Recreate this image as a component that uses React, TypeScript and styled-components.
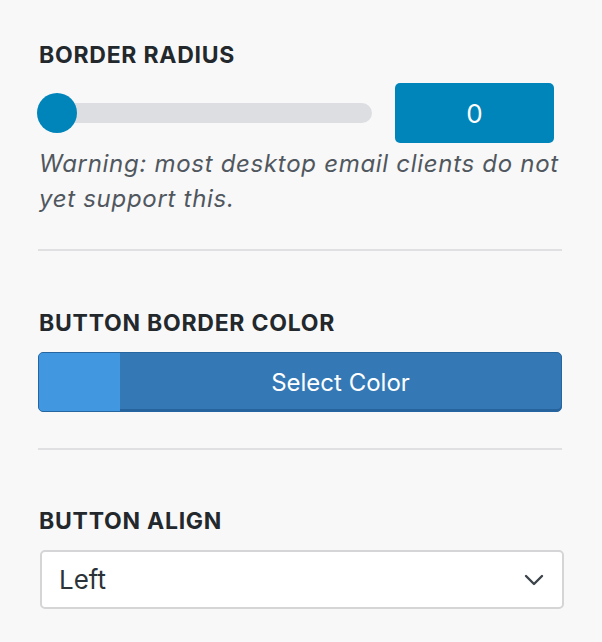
import React from "react";
import styled, { createGlobalStyle } from "styled-components";

const Global = createGlobalStyle`
  html, body { margin: 0; padding: 0; background: #f8f8f8; }
  body { font-family: Inter, "Liberation Sans", sans-serif; }
`;

const Panel = styled.div`
  width: 602px;
  height: 642px;
  box-sizing: border-box;
  padding: 41px 38px 0 38px;
  background: #f8f8f8;
  display: flex;
  flex-direction: column;
`;

const Section = styled.section<{ $top?: number; $bottom?: number }>`
  display: flex;
  flex-direction: column;
  padding-top: ${(p) => p.$top ?? 0}px;
  padding-bottom: ${(p) => p.$bottom ?? 0}px;
`;

const Title = styled.h3`
  margin: 0 0 0 1px;
  font-size: 23px;
  line-height: 28px;
  font-weight: 700;
  letter-spacing: 0.75px;
  color: #23282d;
  text-transform: uppercase;
`;

const ControlRow = styled.div`
  margin-top: 14px;
  display: flex;
  align-items: center;
  gap: 23px;
`;

const Track = styled.div`
  position: relative;
  flex: 0 0 334px;
  height: 20px;
  border-radius: 10px;
  background: #dcdee1;
`;

const Thumb = styled.div`
  position: absolute;
  left: -1px;
  top: -10px;
  width: 40px;
  height: 40px;
  border-radius: 50%;
  background: #0085ba;
`;

const NumberBox = styled.div`
  width: 159px;
  height: 60px;
  border-radius: 5px;
  background: #0085ba;
  color: #fff;
  display: flex;
  align-items: center;
  justify-content: center;
  font-size: 26px;
  font-weight: 400;
`;

const Help = styled.p`
  margin: 3px 0 0 1px;
  font-size: 24px;
  line-height: 35px;
  letter-spacing: 0.7px;
  font-style: italic;
  color: #50575e;
`;

const Divider = styled.div`
  height: 2px;
  width: 524px;
  background: #e0e0e2;
`;

const ColorButton = styled.button`
  margin-top: 15px;
  width: 524px;
  height: 60px;
  padding: 0;
  display: flex;
  align-items: stretch;
  border: 1px solid #2566a0;
  border-radius: 5px;
  overflow: hidden;
  background: #3479b5;
  box-shadow: inset 0 -2px 0 #26639c;
  cursor: pointer;
`;

const Swatch = styled.span<{ $color: string }>`
  flex: 0 0 81px;
  background: ${(p) => p.$color};
`;

const ButtonLabel = styled.span`
  flex: 1;
  display: flex;
  align-items: center;
  justify-content: center;
  font-family: Inter, "Liberation Sans", sans-serif;
  font-size: 24px;
  color: #fff;
`;

const SelectBox = styled.div`
  margin: 15px 0 0 2px;
  width: 524px;
  height: 59px;
  box-sizing: border-box;
  border: 2px solid #d5d5d8;
  border-radius: 5px;
  background: #fff;
  display: flex;
  align-items: center;
  justify-content: space-between;
  padding: 0 18px 0 17px;
  font-size: 26px;
  color: #2c3338;
`;

const Chevron = () => (
  <svg width="20" height="12" viewBox="0 0 20 12" fill="none">
    <path d="M2 2l8 8 8-8" stroke="#3c434a" strokeWidth="2.4" strokeLinecap="round" strokeLinejoin="round" />
  </svg>
);

export default function App() {
  return (
    <>
      <Global />
      <Panel>
        <Section $bottom={33}>
          <Title>Border Radius</Title>
          <ControlRow>
            <Track role="slider" aria-valuenow={0}>
              <Thumb />
            </Track>
            <NumberBox>0</NumberBox>
          </ControlRow>
          <Help>Warning: most desktop email clients do not yet support this.</Help>
        </Section>
        <Divider />
        <Section $top={58} $bottom={36}>
          <Title>Button Border Color</Title>
          <ColorButton>
            <Swatch $color="#4298e0" />
            <ButtonLabel>Select Color</ButtonLabel>
          </ColorButton>
        </Section>
        <Divider />
        <Section $top={57}>
          <Title>Button Align</Title>
          <SelectBox>
            <span>Left</span>
            <Chevron />
          </SelectBox>
        </Section>
      </Panel>
    </>
  );
}
